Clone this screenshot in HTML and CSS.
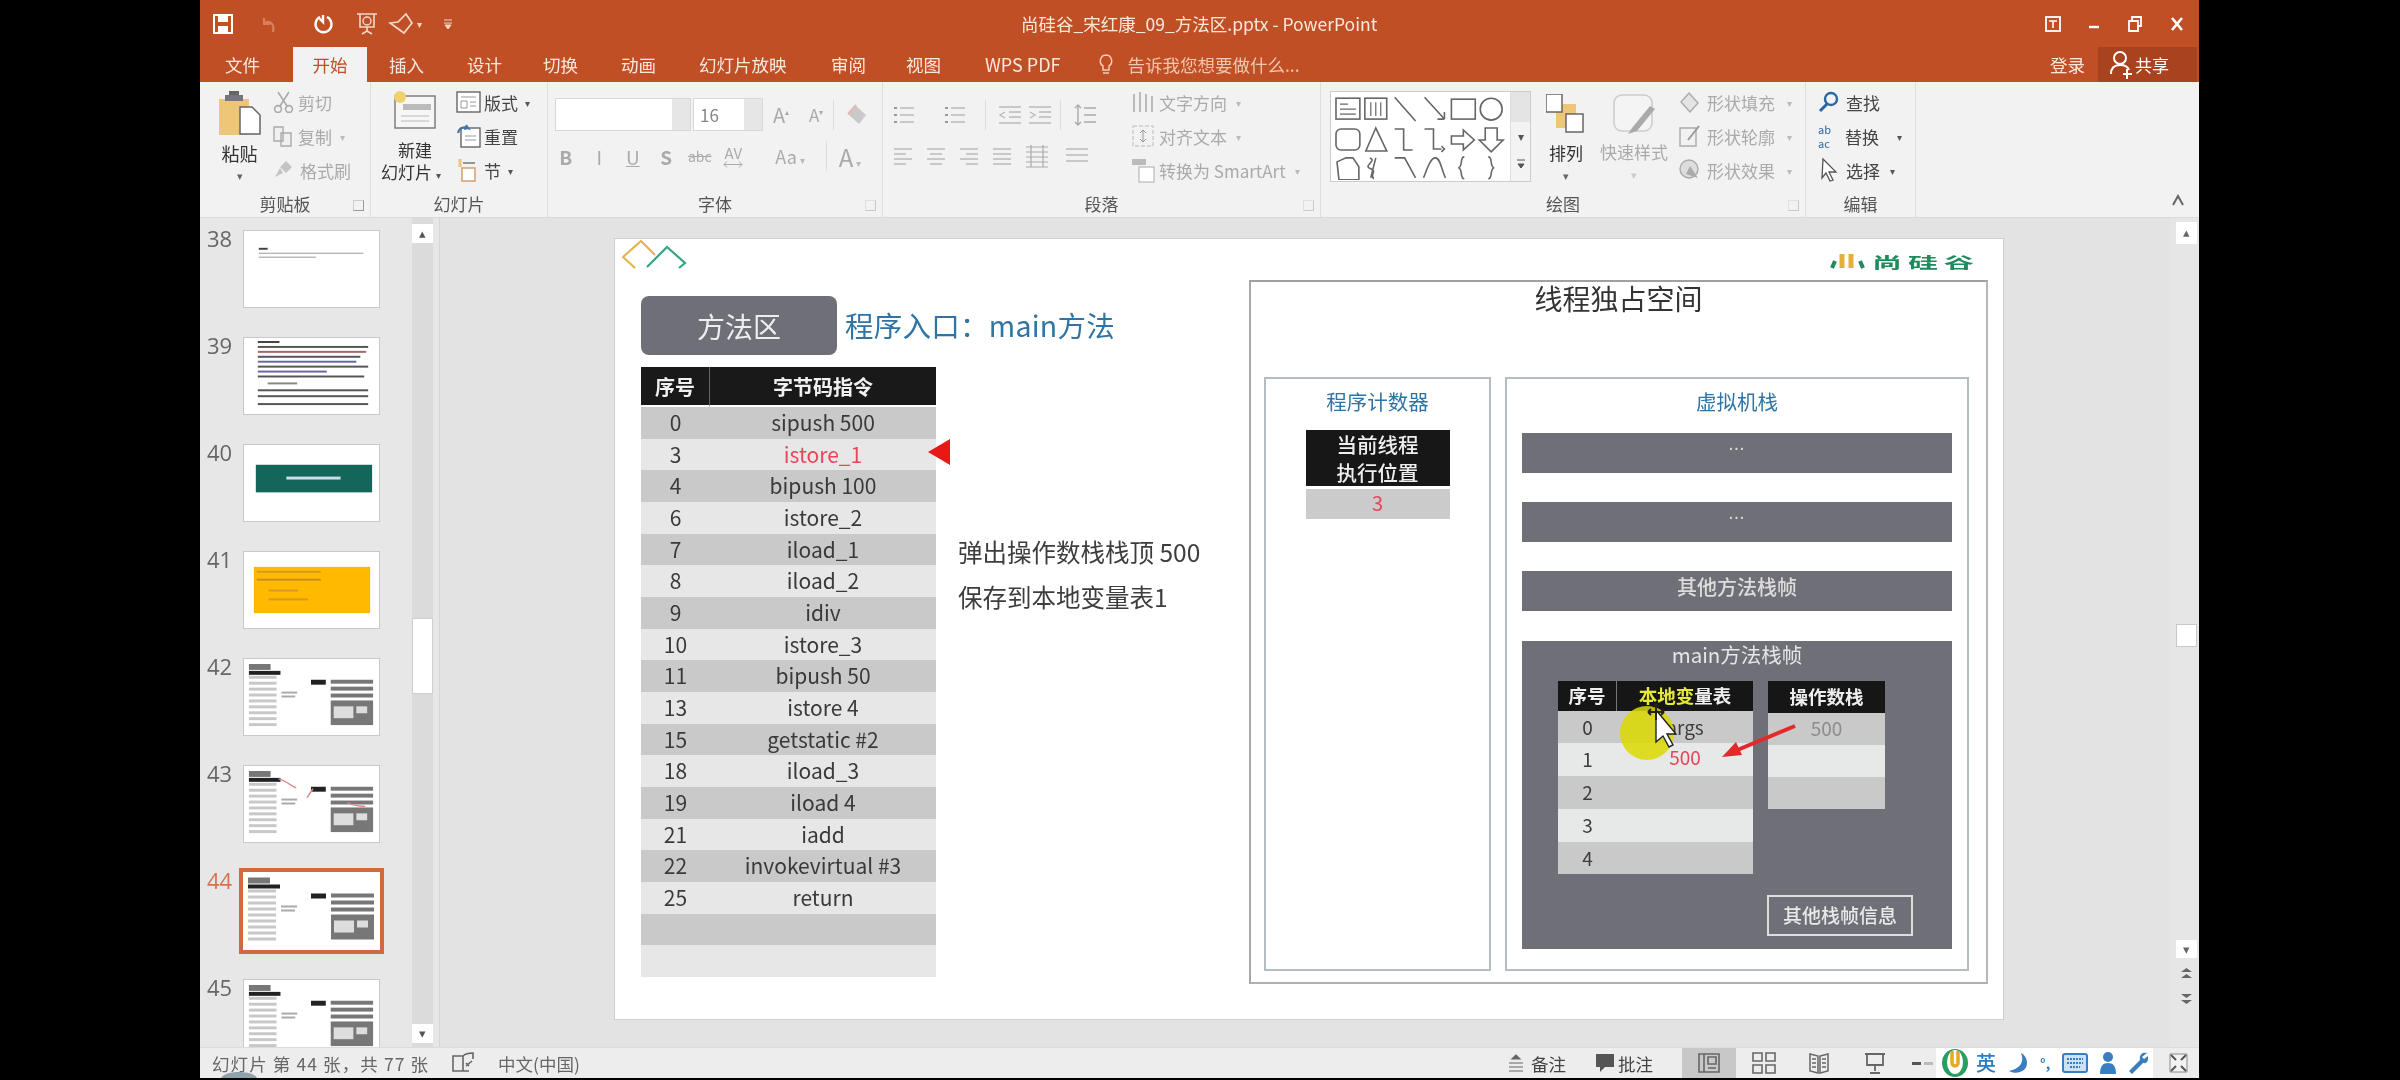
FILE: index.html
```html
<!DOCTYPE html>
<html lang="zh-CN">
<head>
<meta charset="utf-8">
<title>PowerPoint</title>
<link rel="stylesheet" href="styles.css">
</head>
<body>
<svg class="defs" width="0" height="0">
  <symbol id="mini" viewBox="0 0 137 77">
    <rect x="5" y="5" width="22" height="6" fill="#777"/>
    <rect x="5" y="12" width="32" height="4" fill="#222"/>
    <g fill="#c8c8c8"><rect x="5" y="17" width="28" height="3"/><rect x="5" y="23" width="28" height="3"/><rect x="5" y="29" width="28" height="3"/><rect x="5" y="35" width="28" height="3"/><rect x="5" y="41" width="28" height="3"/><rect x="5" y="47" width="28" height="3"/><rect x="5" y="53" width="28" height="3"/><rect x="5" y="59" width="28" height="3"/><rect x="5" y="65" width="28" height="3"/></g>
    <rect x="38" y="33" width="16" height="2" fill="#aaa"/><rect x="38" y="37" width="14" height="2" fill="#aaa"/>
    <rect x="68" y="21" width="15" height="5" fill="#222"/>
    <g fill="#777"><rect x="88" y="21" width="43" height="4"/><rect x="88" y="28" width="43" height="4"/><rect x="88" y="35" width="43" height="4"/><rect x="88" y="42" width="43" height="25"/></g>
    <rect x="91" y="48" width="20" height="12" fill="#ddd"/><rect x="114" y="48" width="11" height="7" fill="#ddd"/>
  </symbol>
</svg>
<div class="window">
  <header class="titlebar">
    <div class="qat">
      <svg class="q-save" width="20" height="20" viewBox="0 0 20 20"><path d="M1 1h18v18H1z" fill="none" stroke="#fff" stroke-width="2"/><rect x="5" y="2" width="10" height="6" fill="#fff"/><rect x="5" y="12" width="10" height="6" fill="#fff"/></svg>
      <svg class="q-undo" width="20" height="20" viewBox="0 0 20 20"><path d="M5 4v6h6M5 10c4-4 11-2 9 8" fill="none" stroke="#d8805c" stroke-width="2.2"/></svg>
      <svg class="q-redo" width="22" height="20" viewBox="0 0 22 20"><path d="M8 3a8 8 0 1 0 7 0M11 1v7l-4-4" fill="none" stroke="#fff" stroke-width="2.4"/></svg>
      <svg class="q-show" width="22" height="24" viewBox="0 0 22 24"><path d="M1 2h20M4 2v13h14V2M11 15v4M6 22l5-3 5 3" fill="none" stroke="#f4d8c8" stroke-width="1.6"/><circle cx="11" cy="9" r="4" fill="none" stroke="#f4d8c8" stroke-width="1.4"/></svg>
      <svg class="q-touch" width="26" height="22" viewBox="0 0 26 22"><path d="M2 10l8-1 8-8 6 9-8 10-7-5z" fill="none" stroke="#f4d8c8" stroke-width="1.7"/></svg>
      <span class="q-caret">▾</span>
      <svg class="q-more" width="10" height="12" viewBox="0 0 10 12"><path d="M1 2h8M1 5h8M2 7l3 4 3-4z" stroke="#f4d8c8" fill="#f4d8c8"/></svg>
    </div>
    <div class="doc-title">尚硅谷_宋红康_09_方法区.pptx - PowerPoint</div>
    <div class="win-btns">
      <svg width="16" height="16" viewBox="0 0 16 16"><rect x="1" y="1" width="14" height="14" fill="none" stroke="#fff" stroke-width="1.8"/><path d="M4 5h8M8 5v7" stroke="#fff" stroke-width="1.6"/></svg>
      <svg width="12" height="16" viewBox="0 0 12 16"><path d="M1 11h10" stroke="#fff" stroke-width="2.4"/></svg>
      <svg width="16" height="16" viewBox="0 0 16 16"><path d="M5 4V1h9v9h-3M2 5h9v10H2z" fill="none" stroke="#fff" stroke-width="1.8"/></svg>
      <svg width="14" height="16" viewBox="0 0 14 16"><path d="M2 2l10 12M12 2L2 14" stroke="#fff" stroke-width="2.6"/></svg>
    </div>
  </header>

  <nav class="tabs">
    <span class="tab t-file">文件</span>
    <span class="tab t-active">开始</span>
    <span class="tab t-insert">插入</span>
    <span class="tab t-design">设计</span>
    <span class="tab t-trans">切换</span>
    <span class="tab t-anim">动画</span>
    <span class="tab t-show">幻灯片放映</span>
    <span class="tab t-review">审阅</span>
    <span class="tab t-view">视图</span>
    <span class="tab t-wps">WPS PDF</span>
    <svg class="bulb" width="16" height="24" viewBox="0 0 16 24"><path d="M8 2a6 6 0 0 0-3 11v4h6v-4A6 6 0 0 0 8 2zM5 20h6" fill="none" stroke="#f3cdb8" stroke-width="1.5"/></svg>
    <span class="tell">告诉我您想要做什么...</span>
    <span class="login">登录</span>
    <span class="share">
      <svg width="24" height="30" viewBox="0 0 24 30"><circle cx="11" cy="8" r="6" fill="none" stroke="#fff" stroke-width="2"/><path d="M2 24c0-7 4-9 9-9s8 2 9 5M14 24h9M18 19v10" fill="none" stroke="#fff" stroke-width="2"/></svg>
      <span>共享</span>
    </span>
  </nav>

  <section class="ribbon">
    <div class="group g-clip">
      <div class="g-body">
        <div class="big paste">
          <svg width="42" height="44" viewBox="0 0 42 44"><rect x="0" y="8" width="30" height="36" fill="#edc777"/><rect x="10" y="0" width="10" height="6" fill="#666"/><rect x="6" y="4" width="18" height="6" fill="#777"/><path d="M21 16h12l8 8v19H21z" fill="#fff" stroke="#666" stroke-width="1.5"/></svg>
          <span class="dark">粘贴</span>
          <span class="drop">▾</span>
        </div>
        <div class="cmds">
          <div class="cmd off"><svg width="23" height="22" viewBox="0 0 23 22"><path d="M6 1l9 14M17 1L8 15" stroke="#aaa" stroke-width="1.6"/><circle cx="6" cy="18" r="3.4" fill="none" stroke="#aaa" stroke-width="1.6"/><circle cx="17" cy="18" r="3.4" fill="none" stroke="#aaa" stroke-width="1.6"/></svg><span>剪切</span></div>
          <div class="cmd off"><svg width="23" height="22" viewBox="0 0 23 22"><path d="M2 2h9v14H2zM9 8h10v13H9z" fill="#f0f0f0" stroke="#aaa" stroke-width="1.4"/></svg><span>复制</span><i class="mini-drop">▾</i></div>
          <div class="cmd off fmt"><svg width="23" height="22" viewBox="0 0 23 22"><path d="M14 2l6 6-6 6-6-6zM8 9l-5 9 8-4" fill="#c4c4c4"/></svg><span>格式刷</span></div>
        </div>
      </div>
      <div class="g-label"><span>剪贴板</span><i class="launch"></i></div>
    </div>

    <div class="group g-slides">
      <div class="g-body">
        <div class="big newslide">
          <svg width="42" height="38" viewBox="0 0 42 38"><rect x="1" y="5" width="40" height="32" fill="#f6f6f6" stroke="#777" stroke-width="1.4"/><rect x="9" y="13" width="28" height="6" fill="#bbb"/><path d="M7 25h28M7 30h28" stroke="#bbb"/><circle cx="6" cy="6" r="6" fill="#f0d070"/></svg>
          <span class="dark nb nb1">新建</span>
          <span class="dark nb nb2">幻灯片<i class="inline-drop">▾</i></span>
        </div>
        <div class="cmds">
          <div class="cmd"><svg width="25" height="22" viewBox="0 0 25 22"><rect x="1" y="1" width="23" height="20" fill="#fff" stroke="#666" stroke-width="1.4"/><path d="M5 6h15M5 10h6v7H5zM14 11h6M14 15h6" stroke="#999" fill="none"/></svg><span>版式</span><i class="inline-drop">▾</i></div>
          <div class="cmd"><svg width="25" height="24" viewBox="0 0 25 24"><rect x="5" y="4" width="19" height="19" fill="#fff" stroke="#666" stroke-width="1.4"/><path d="M2 9a7 7 0 0 1 10-5l-2-3M12 4l-4 1" fill="none" stroke="#3f77a8" stroke-width="2"/><path d="M9 12h11M9 16h11" stroke="#999"/></svg><span>重置</span></div>
          <div class="cmd"><svg width="25" height="24" viewBox="0 0 25 24"><path d="M7 5h12M7 12h12" stroke="#777" stroke-width="1.4"/><path d="M4 1v8" stroke="#edc777" stroke-width="3"/><rect x="6" y="10" width="13" height="13" fill="#fff" stroke="#c96" stroke-width="1.4"/></svg><span>节</span><i class="inline-drop">▾</i></div>
        </div>
      </div>
      <div class="g-label"><span>幻灯片</span></div>
    </div>

    <div class="group g-font">
      <div class="g-body col">
        <div class="font-row1">
          <div class="combo c-name"><i></i></div>
          <div class="combo c-size"><span>16</span><i></i></div>
          <span class="fa fa-up">A<sup>▴</sup></span>
          <span class="fa fa-down">A<sup>▾</sup></span>
          <i class="vline"></i>
          <svg class="eraser" width="22" height="24" viewBox="0 0 22 24"><path d="M9 2l11 10-7 9L2 11z" fill="#c9c9c9"/><path d="M2 11l8-9" stroke="#e8b8b0" stroke-width="2"/></svg>
        </div>
        <div class="font-row2">
          <b class="fc">B</b><em class="fc">I</em><u class="fc">U</u><b class="fc fs">S</b><s class="fc fsm">abc</s><span class="fc fav">AV<svg width="20" height="7" viewBox="0 0 20 7"><path d="M1 3.5h18M1 3.5l3-3M1 3.5l3 3M19 3.5l-3-3M19 3.5l-3 3" stroke="#aaa" fill="none"/></svg></span>
          <span class="fc faa">Aa<i class="mini-drop">▾</i></span>
          <i class="vline v2"></i>
          <span class="fc fbig">A<i class="mini-drop">▾</i></span>
        </div>
      </div>
      <div class="g-label"><span>字体</span><i class="launch faint"></i></div>
    </div>

    <div class="group g-para">
      <div class="g-body">
        <div class="para-icons">
          <div class="para-row">
            <svg class="p1" width="20" height="20" viewBox="0 0 20 20"><path d="M6 3h14M6 10h14M6 17h14" stroke="#bbb" stroke-width="1.4"/><path d="M0 3h3M0 10h3M0 17h3" stroke="#999" stroke-width="2"/></svg>
            <svg class="p2" width="20" height="20" viewBox="0 0 20 20"><path d="M6 3h14M6 10h14M6 17h14" stroke="#bbb" stroke-width="1.4"/><path d="M0 3h3M0 10h3M0 17h3" stroke="#999" stroke-width="2"/></svg>
            <i class="vline v3"></i>
            <svg class="p3" width="22" height="20" viewBox="0 0 22 20"><path d="M0 2h22M10 7h12M10 12h12M0 18h22M6 7L1 10l5 3" fill="none" stroke="#bbb" stroke-width="1.4"/></svg>
            <svg class="p4" width="22" height="20" viewBox="0 0 22 20"><path d="M0 2h22M10 7h12M10 12h12M0 18h22M1 7l5 3-5 3" fill="none" stroke="#bbb" stroke-width="1.4"/></svg>
            <i class="vline v4"></i>
            <svg class="p5" width="22" height="24" viewBox="0 0 22 24"><path d="M4 2v20M1 5l3-3 3 3M1 19l3 3 3-3M10 5h12M10 12h12M10 19h12" fill="none" stroke="#aaa" stroke-width="1.4"/></svg>
          </div>
          <div class="para-row r2">
            <svg width="18" height="18" viewBox="0 0 18 18"><path d="M0 2h18M0 7h12M0 12h18M0 17h12" stroke="#bbb" stroke-width="1.4"/></svg>
            <svg width="18" height="18" viewBox="0 0 18 18"><path d="M0 2h18M3 7h12M0 12h18M3 17h12" stroke="#bbb" stroke-width="1.4"/></svg>
            <svg width="18" height="18" viewBox="0 0 18 18"><path d="M0 2h18M6 7h12M0 12h18M6 17h12" stroke="#bbb" stroke-width="1.4"/></svg>
            <svg width="18" height="18" viewBox="0 0 18 18"><path d="M0 2h18M0 7h18M0 12h18M0 17h18" stroke="#bbb" stroke-width="1.4"/></svg>
            <svg width="22" height="24" viewBox="0 0 22 24"><path d="M0 3h22M0 8h22M0 13h22M0 18h22M0 23h22M5 1v22M17 1v22" stroke="#aaa" stroke-width="1.2"/></svg>
            <svg class="pcol" width="22" height="20" viewBox="0 0 22 20"><path d="M0 3h22M0 9h22M0 15h22" stroke="#bbb" stroke-width="1.6"/></svg>
          </div>
        </div>
        <div class="cmds">
          <div class="cmd off"><svg width="24" height="24" viewBox="0 0 24 24"><path d="M3 22V4M9 22V2M15 22V4M21 22V6" stroke="#bbb" stroke-width="2"/></svg><span>文字方向</span><i class="mini-drop">▾</i></div>
          <div class="cmd off"><svg width="24" height="24" viewBox="0 0 24 24"><path d="M2 2h20v20H2z" fill="none" stroke="#bbb" stroke-dasharray="4 2"/><path d="M12 6v12M9 9l3-3 3 3M9 15l3 3 3-3" fill="none" stroke="#999"/></svg><span>对齐文本</span><i class="mini-drop">▾</i></div>
          <div class="cmd off"><svg width="24" height="26" viewBox="0 0 24 26"><path d="M1 2h14v6H1z" fill="#bbb"/><rect x="8" y="10" width="15" height="15" fill="#fff" stroke="#aaa"/></svg><span>转换为 SmartArt</span><i class="mini-drop">▾</i></div>
        </div>
      </div>
      <div class="g-label"><span>段落</span><i class="launch faint"></i></div>
    </div>

    <div class="group g-draw">
      <div class="g-body">
        <div class="gallery">
          <svg width="178" height="88" viewBox="0 0 178 88" fill="none" stroke="#666" stroke-width="1.6">
            <rect x="3" y="6" width="24" height="21"/><path d="M7 12h8M7 17h16M7 22h16" stroke-width="1.2"/>
            <rect x="32" y="6" width="22" height="21"/><path d="M38 10v14M43 10v14M48 10v14" stroke-width="1.2"/>
            <path d="M62 5l21 24M92 5l20 22"/><path d="M112 27v-7M112 27h-7"/>
            <rect x="119" y="7" width="24" height="20"/><circle cx="159" cy="17" r="11"/>
            <rect x="3" y="37" width="24" height="21" rx="5"/><path d="M43 36l-10 23h21z"/>
            <path d="M62 37h9v21h9M92 37h9v20h8M109 54l3 3-3 3"/>
            <path d="M119 44h12v-6l11 10-11 10v-6h-12z"/><path d="M153 36h12v12h6l-12 12-12-12h6z"/>
            <path d="M4 70l9-4h7l6 9v13H6z"/><path d="M37 66c8 3-8 8 1 11 7 3-2 6 3 10 M43 66l-5 20"/>
            <path d="M62 66h10l11 20"/><path d="M91 86c4-10 7-20 12-20s6 12 10 20"/>
            <path d="M132 65c-5 0-1 10-6 11 5 1 1 11 6 11M156 65c5 0 1 10 6 11-5 1-1 11-6 11"/>
          </svg>
          <div class="gal-scroll">
            <i class="gs gs-top"></i>
            <i class="gs"><b>▾</b></i>
            <i class="gs"><svg width="10" height="12" viewBox="0 0 10 12"><path d="M1 2h8M2 6l3 4 3-4z" stroke="#555" fill="#555"/></svg></i>
          </div>
        </div>
        <div class="big arrange">
          <svg width="40" height="40" viewBox="0 0 40 40"><rect x="10" y="10" width="20" height="24" fill="#edc777"/><rect x="0" y="0" width="16" height="18" fill="#fff" stroke="#666" stroke-width="1.5"/><rect x="20" y="20" width="17" height="18" fill="#fff" stroke="#666" stroke-width="1.5"/></svg>
          <span class="dark">排列</span>
          <span class="drop">▾</span>
        </div>
        <div class="big quick off">
          <svg width="44" height="42" viewBox="0 0 44 42"><rect x="2" y="1" width="38" height="36" rx="8" fill="#f4f4f4" stroke="#ccc" stroke-width="1.5"/><path d="M38 12L20 34l-4 6 9-3 18-22z" fill="#aaa"/></svg>
          <span>快速样式</span>
          <span class="drop">▾</span>
        </div>
        <div class="cmds c-shape">
          <div class="cmd off"><svg width="22" height="24" viewBox="0 0 22 24"><path d="M11 3l9 10-8 9-9-10z" fill="#e4e4e4" stroke="#aaa" stroke-width="1.4"/></svg><span>形状填充</span><i class="mini-drop">▾</i></div>
          <div class="cmd off"><svg width="22" height="24" viewBox="0 0 22 24"><path d="M2 4h16v18H2z" fill="none" stroke="#aaa" stroke-width="1.4"/><path d="M21 2L10 16" stroke="#999" stroke-width="2"/></svg><span>形状轮廓</span><i class="mini-drop">▾</i></div>
          <div class="cmd off"><svg width="22" height="24" viewBox="0 0 22 24"><circle cx="11" cy="11" r="9" fill="#ddd" stroke="#aaa" stroke-width="1.4"/><path d="M8 16l12 4-8-12z" fill="#aaa"/></svg><span>形状效果</span><i class="mini-drop">▾</i></div>
        </div>
      </div>
      <div class="g-label"><span>绘图</span><i class="launch faint"></i></div>
    </div>

    <div class="group g-edit">
      <div class="g-body">
        <div class="cmds">
          <div class="cmd"><svg width="22" height="22" viewBox="0 0 22 22"><circle cx="13" cy="8" r="6" fill="none" stroke="#2a66a3" stroke-width="2.4"/><path d="M9 13l-7 7" stroke="#2a66a3" stroke-width="3"/></svg><span>查找</span></div>
          <div class="cmd"><span class="abac">ab<br>ac</span><span>替换</span><i class="inline-drop wide">▾</i></div>
          <div class="cmd"><svg width="22" height="26" viewBox="0 0 22 26"><path d="M5 2l13 13h-7l4 8-3 1-4-8-4 5z" fill="#fff" stroke="#555" stroke-width="1.3"/></svg><span>选择</span><i class="inline-drop">▾</i></div>
        </div>
      </div>
      <div class="g-label"><span>编辑</span></div>
    </div>
    <div class="collapse"><svg width="14" height="12" viewBox="0 0 14 12"><path d="M2 11l5-9 5 9" fill="none" stroke="#666" stroke-width="2"/></svg></div>
  </section>

  <main class="workspace">
    <aside class="thumbs">
      <div class="thumb-list">
        <div class="t-row"><span class="t-num">38</span><div class="thumb"><svg viewBox="0 0 137 77"><rect x="15" y="17" width="9" height="2" fill="#444"/><rect x="15" y="22" width="106" height="1" fill="#999"/><rect x="15" y="26" width="58" height="1" fill="#999"/></svg></div></div>
        <div class="t-row"><span class="t-num">39</span><div class="thumb"><svg viewBox="0 0 137 77"><rect x="14" y="3" width="22" height="2" fill="#444"/><g fill="#555"><rect x="14" y="8" width="112" height="2"/><rect x="14" y="18" width="104" height="2"/><rect x="14" y="28" width="112" height="2"/><rect x="14" y="38" width="108" height="2"/><rect x="14" y="52" width="112" height="2"/><rect x="14" y="58" width="112" height="2"/><rect x="14" y="66" width="112" height="2"/></g><rect x="14" y="13" width="110" height="2" fill="#a66"/><rect x="14" y="23" width="100" height="2" fill="#66a"/><rect x="14" y="33" width="70" height="2" fill="#66a"/><rect x="24" y="45" width="30" height="2" fill="#888"/></svg></div></div>
        <div class="t-row"><span class="t-num">40</span><div class="thumb"><svg viewBox="0 0 137 77"><rect x="12" y="20" width="118" height="28" fill="#14665a"/><rect x="43" y="32" width="55" height="3" fill="#cde"/></svg></div></div>
        <div class="t-row"><span class="t-num">41</span><div class="thumb"><svg viewBox="0 0 137 77"><rect x="10" y="15" width="118" height="47" fill="#ffba00"/><rect x="13" y="19" width="65" height="2" fill="#d79a20"/><rect x="13" y="27" width="65" height="2" fill="#c88f20"/><rect x="25" y="38" width="30" height="2" fill="#d79a20"/><rect x="25" y="47" width="40" height="2" fill="#d79a20"/></svg></div></div>
        <div class="t-row"><span class="t-num">42</span><div class="thumb"><svg viewBox="0 0 137 77"><use href="#mini"/></svg></div></div>
        <div class="t-row"><span class="t-num">43</span><div class="thumb"><svg viewBox="0 0 137 77"><use href="#mini"/><path d="M35 13c8 2 14 8 18 9M64 32l6-9M105 37c5 4 12 3 18 4" stroke="#d88" stroke-width="1.5" fill="none"/></svg></div></div>
        <div class="t-row sel"><span class="t-num">44</span><div class="thumb"><svg viewBox="0 0 137 77"><use href="#mini"/></svg></div></div>
        <div class="t-row"><span class="t-num">45</span><div class="thumb"><svg viewBox="0 0 137 77"><use href="#mini"/></svg></div></div>
      </div>
      <div class="vscroll">
        <span class="sbtn">▴</span>
        <span class="sthumb"></span>
        <span class="sbtn sdown">▾</span>
      </div>
    </aside>

    <div class="canvas">
      <article class="slide">
        <div class="slide-left">
          <svg class="logo-l" width="68" height="30" viewBox="0 0 68 30" fill="none" stroke-width="2.2"><path d="M13 28L1 17 19 1l14 14" stroke="#e3b350"/><path d="M25 27L45 7l18 16-6 5" stroke="#36a585"/></svg>
          <div class="head-row">
            <div class="method">方法区</div>
            <h1 class="entry">程序入口：main方法</h1>
          </div>
          <div class="code-area">
            <div class="code">
              <div class="c-head c-no">序号</div><div class="c-head">字节码指令</div>
              <div class="c-row dark-r"><span>0</span><span>sipush 500</span></div>
              <div class="c-row cur"><span>3</span><span class="red">istore_1</span><i class="pointer"></i></div>
              <div class="c-row dark-r"><span>4</span><span>bipush 100</span></div>
              <div class="c-row"><span>6</span><span>istore_2</span></div>
              <div class="c-row dark-r"><span>7</span><span>iload_1</span></div>
              <div class="c-row"><span>8</span><span>iload_2</span></div>
              <div class="c-row dark-r"><span>9</span><span>idiv</span></div>
              <div class="c-row"><span>10</span><span>istore_3</span></div>
              <div class="c-row dark-r"><span>11</span><span>bipush 50</span></div>
              <div class="c-row"><span>13</span><span>istore 4</span></div>
              <div class="c-row dark-r"><span>15</span><span>getstatic #2</span></div>
              <div class="c-row"><span>18</span><span>iload_3</span></div>
              <div class="c-row dark-r"><span>19</span><span>iload 4</span></div>
              <div class="c-row"><span>21</span><span>iadd</span></div>
              <div class="c-row dark-r"><span>22</span><span>invokevirtual #3</span></div>
              <div class="c-row"><span>25</span><span>return</span></div>
              <div class="c-row dark-r"><span></span><span></span></div>
              <div class="c-row"><span></span><span></span></div>
            </div>
            <div class="note">
              <p>弹出操作数栈栈顶 500</p>
              <p>保存到本地变量表1</p>
            </div>
          </div>
        </div>
        <div class="slide-right">
          <div class="brand">
            <svg width="36" height="16" viewBox="0 0 36 16"><path d="M3 15l3-7M31 8l3 7" stroke="#1f8a5c" stroke-width="4"/><path d="M13 15V1M22 15V1" stroke="#e4b03b" stroke-width="5"/></svg>
            <span class="brand-text">尚硅谷</span>
          </div>
          <section class="frame">
            <h2 class="frame-title">线程独占空间</h2>
            <div class="frame-cols">
              <div class="box pc">
                <h3 class="box-title">程序计数器</h3>
                <div class="pc-head">当前线程<br>执行位置</div>
                <div class="pc-val">3</div>
              </div>
              <div class="box stack">
                <h3 class="box-title">虚拟机栈</h3>
                <div class="bar">...</div>
                <div class="bar">...</div>
                <div class="bar bar-t">其他方法栈帧</div>
                <div class="frame-main">
                  <div class="fm-title">main方法栈帧</div>
                  <div class="fm-tables">
                    <div class="lv">
                      <div class="lv-h lv-no">序号</div>
                      <div class="lv-h lv-name"><span class="yel">本地变</span>量表</div>
                      <div class="lv-c lv-d">0</div><div class="lv-c lv-d">args</div>
                      <div class="lv-c">1</div><div class="lv-c"></div>
                      <div class="lv-c lv-d">2</div><div class="lv-c lv-d"></div>
                      <div class="lv-c">3</div><div class="lv-c"></div>
                      <div class="lv-c lv-d">4</div><div class="lv-c lv-d"></div>
                    </div>
                    <div class="ops">
                      <div class="ops-h">操作数栈</div>
                      <div class="ops-c ops-d"><span class="faded">500</span></div>
                      <div class="ops-c"></div>
                      <div class="ops-c ops-d"></div>
                    </div>
                  </div>
                  <div class="other">其他栈帧信息</div>
                  <svg class="overlay" width="431" height="308" viewBox="0 0 431 308">
                    <circle cx="125" cy="92" r="27" fill="#dcd800" opacity=".85"/>
                    <path d="M134 69v32l7-6 6 11 4-2-6-11h9z" fill="#fff" stroke="#222" stroke-width="1.4"/>
                    <path d="M126 71h16M134 63v16M126 71l3-3M126 71l3 3M142 71l-3-3M142 71l-3 3M134 63l-3 3M134 63l3 3" stroke="#222" stroke-width="1.8" fill="none"/>
                    <path d="M273 85l-60 25" stroke="#e5292a" stroke-width="4"/><path d="M200 116l14-15 6 13z" fill="#e5292a"/>
                    <text class="ov-500" x="163" y="124">500</text>
                  </svg>
                </div>
              </div>
            </div>
          </section>
        </div>
      </article>
    </div>

    <div class="rscroll">
      <span class="rbtn">▴</span>
      <span class="rthumb"></span>
      <span class="rbtn r-down">▾</span>
      <svg class="rarrow" width="21" height="12" viewBox="0 0 21 12"><path d="M5 5l5.5-4 5.5 4zM5 11l5.5-4 5.5 4z" fill="#666"/></svg>
      <svg class="rarrow r2" width="21" height="12" viewBox="0 0 21 12"><path d="M5 1l5.5 4 5.5-4zM5 7l5.5 4 5.5-4z" fill="#666"/></svg>
    </div>
  </main>

  <footer class="status">
    <svg class="st-arc" width="38" height="7" viewBox="0 0 38 7"><path d="M1 7c4-8 32-8 36 0z" fill="#8fa3ad"/></svg>
    <span class="st-count">幻灯片 第 44 张，共 77 张</span>
    <svg class="st-book" width="22" height="22" viewBox="0 0 22 22"><path d="M11 4H1v15h10V4zM11 4c2-2 6-3 10-3v6M11 19h6M14 14l6-5M14 11l3 3" fill="none" stroke="#666" stroke-width="1.6"/></svg>
    <span class="st-lang">中文(中国)</span>
    <span class="st-fill"></span>
    <svg width="14" height="20" viewBox="0 0 14 20"><path d="M7 2l-4 4h8zM0 10h14M0 14h14M0 18h14" stroke="#666" fill="#666" stroke-width="1.2"/></svg>
    <span class="st-note">备注</span>
    <svg class="st-cicon" width="18" height="20" viewBox="0 0 18 20"><path d="M0 1h18v13H9l-5 5v-5H0z" fill="#555"/></svg>
    <span class="st-cmt">批注</span>
    <span class="view v-on"><svg width="22" height="20" viewBox="0 0 22 20"><path d="M1 1h20v18H1zM6 1v18M10 4h8v7h-8zM10 15h8" fill="none" stroke="#666" stroke-width="1.6"/></svg></span>
    <span class="view v2nd"><svg width="24" height="22" viewBox="0 0 24 22"><path d="M1 1h9v8H1zM14 1h9v8h-9zM1 13h9v8H1zM14 13h9v8h-9z" fill="none" stroke="#666" stroke-width="1.6"/></svg></span>
    <span class="view v3rd"><svg width="20" height="22" viewBox="0 0 20 22"><path d="M1 2l8 2v17l-8-2zM19 2l-8 2v17l8-2zM3 7h4M3 11h4M3 15h4M13 7h4M13 11h4M13 15h4" fill="none" stroke="#666" stroke-width="1.5"/></svg></span>
    <span class="view v4th"><svg width="20" height="22" viewBox="0 0 20 22"><path d="M0 2h20M2 2v11h16V2M10 13v6M5 21h10" fill="none" stroke="#666" stroke-width="1.8"/></svg></span>
    <span class="zoom-mini"><i></i><i class="z2"></i></span>
    <div class="ime">
      <svg width="28" height="30" viewBox="0 0 28 30"><ellipse cx="14" cy="15" rx="13" ry="14" fill="#2a9d63"/><ellipse cx="14" cy="14" rx="8" ry="12" fill="#fff"/><path d="M11 3v12a3 3 0 0 0 6 0V3" fill="none" stroke="#e9a821" stroke-width="3.5"/></svg>
      <span class="ime-en">英</span>
      <svg width="20" height="24" viewBox="0 0 20 24"><path d="M13 2c4 10-2 16-12 18 7 4 18 1 18-8 0-4-2-8-6-10z" fill="#3a7ec2"/></svg>
      <span class="ime-dot">°,</span>
      <svg width="26" height="20" viewBox="0 0 26 20"><rect x="1" y="1" width="24" height="18" rx="2" fill="#cfe2f4" stroke="#3a7ec2" stroke-width="2"/><path d="M5 6h16M5 10h16M8 14h10" stroke="#3a7ec2" stroke-width="2" stroke-dasharray="2 1"/></svg>
      <svg width="16" height="24" viewBox="0 0 16 24"><circle cx="8" cy="6" r="5" fill="#3a7ec2"/><path d="M0 23c0-8 3-11 8-11s8 3 8 11z" fill="#3a7ec2"/></svg>
      <svg width="20" height="24" viewBox="0 0 20 24"><path d="M19 2c-5-1-8 2-7 7L1 20l3 3 11-11c4 1 6-3 5-7l-4 3-2-2z" fill="#3a7ec2"/></svg>
    </div>
    <svg class="st-fit" width="19" height="20" viewBox="0 0 19 20"><path d="M1 1h17v18H1z" fill="#f2f2f2" stroke="#888"/><path d="M2 2l5 5M17 2l-5 5M2 18l5-5M17 18l-5-5" stroke="#555" stroke-width="2"/></svg>
  </footer>
</div>
</body>
</html>
```

FILE: styles.css
```css
* { box-sizing: border-box; }
html, body { margin: 0; height: 100%; background: #000; overflow: hidden; }
body { font-family: "Noto Sans CJK SC", "Noto Sans", sans-serif; color: #444; }
.defs { position: absolute; }
i { font-style: normal; }
h1, h2, h3, p { margin: 0; font-weight: 400; }

.window { width: 1999px; height: 1078px; margin-left: 200px; background: #e4e3e3; display: flex; flex-direction: column; filter: blur(.55px); overflow: hidden; }

/* title */
.titlebar { height: 47px; background: #c14f26; display: flex; align-items: center; color: #fbe8dd; flex: none; }
.qat { width: 821px; display: flex; align-items: center; padding-left: 13px; }
.q-undo { margin-left: 26px; }
.q-redo { margin-left: 33px; }
.q-show { margin-left: 22px; }
.q-touch { margin-left: 10px; }
.q-caret { font-size: 10px; margin-left: 3px; color: #f4d8c8; }
.q-more { margin-left: 21px; }
.doc-title { font-size: 17.5px; white-space: nowrap; width: 356px; }
.win-btns { margin-left: auto; display: flex; align-items: center; gap: 27px; padding-right: 15px; }

/* tabs */
.tabs { height: 35px; background: #c14f26; display: flex; align-items: center; font-size: 17.5px; color: #fbe8dd; flex: none; padding-right: 2px; }
.tab { white-space: nowrap; line-height: 35px; }
.t-file { margin-left: 25px; }
.t-active { margin-left: 33px; width: 74px; text-align: center; background: #f3f2f2; color: #c14f26; align-self: stretch; }
.t-insert { margin-left: 22px; }
.t-design { margin-left: 43px; }
.t-trans { margin-left: 41px; }
.t-anim { margin-left: 43px; }
.t-show { margin-left: 43px; }
.t-review { margin-left: 44.5px; }
.t-view { margin-left: 40px; }
.t-wps { margin-left: 44px; font-size: 18px; }
.bulb { margin-left: 38px; flex: none; }
.tell { margin-left: 13px; font-size: 17.5px; color: #f0c6ae; white-space: nowrap; }
.login { margin-left: auto; font-size: 17.5px; }
.share { margin-left: 13px; width: 99px; align-self: stretch; background: #a9421f; display: flex; align-items: center; gap: 2px; padding-left: 11px; font-size: 17px; color: #fff; }

/* ribbon */
.ribbon { height: 136px; background: #f3f2f2; display: flex; flex: none; border-bottom: 1px solid #dadada; font-size: 16px; color: #555; }
.group { display: flex; flex-direction: column; border-right: 1px solid #dedede; padding-top: 3px; flex: none; }
.g-body { height: 105px; display: flex; }
.g-body.col { flex-direction: column; }
.g-label { height: 26px; position: relative; display: flex; justify-content: center; align-items: center; font-size: 17px; color: #555; }
.launch { position: absolute; right: 6px; bottom: 5px; width: 11px; height: 11px; border: 1px solid #999; border-top-color: #ccc; border-left-color: #ccc; }
.launch.faint { opacity: .45; }
.g-clip { width: 171px; }
.g-slides { width: 177px; }
.g-font { width: 335px; }
.g-para { width: 438px; }
.g-draw { width: 485px; }
.g-edit { width: 110px; }

.big { display: flex; flex-direction: column; align-items: center; color: #aaa; font-size: 17px; line-height: 22px; white-space: nowrap; }
.big svg { margin-top: 6px; }
.big .dark { color: #333; }
.drop { font-size: 11px; color: #666; }
.paste { width: 45px; margin-left: 17px; }
.paste .dark { margin-top: 7px; font-size: 18px; }
.paste svg { margin-top: 6px; }
.newslide { width: 70px; margin-left: 9px; }
.nb1 { margin-top: 10px; }
.nb2 { margin-right: 8px; }
.cmds { display: grid; grid-template-rows: repeat(3, 34px); }
.cmd { display: flex; align-items: center; gap: 3px; font-size: 17px; color: #444; white-space: nowrap; }
.cmd.off { color: #aaa; }
.cmd svg { flex: none; }
.fmt span { margin-left: 2px; }
.g-clip .cmds { margin-left: 10px; }
.g-slides .cmds { margin-left: 6px; }
.inline-drop { font-size: 10px; color: #555; margin-left: 4px; }
.inline-drop.wide { margin-left: 12px; }
.mini-drop { font-size: 10px; color: #bbb; margin-left: 5px; }

.font-row1 { display: flex; align-items: center; height: 33px; margin-top: 13px; padding-left: 7px; color: #aaa; }
.combo { height: 33px; background: #fff; border: 1px solid #d8d8d8; position: relative; font-size: 17px; color: #888; line-height: 31px; padding-left: 6px; }
.combo i { position: absolute; right: 0; top: 0; bottom: 0; width: 18px; background: #e6e6e6; }
.c-name { width: 136px; }
.c-size { width: 70px; margin-left: 2px; }
.fa { font-size: 20px; margin-left: 10px; width: 24px; line-height: 1; }
.fa sup { font-size: 8px; }
.fa-down { font-size: 17px; margin-left: 12px; }
.vline { display: block; width: 1px; height: 30px; background: #ddd; }
.eraser { margin-left: 12px; }
.font-row2 { display: flex; align-items: center; height: 50px; padding-left: 1px; color: #aaa; font-size: 19px; }
.fc { width: 33.5px; text-align: center; font-style: normal; }
.fsm { font-size: 14px; }
.fav { font-size: 15px; line-height: 16px; display: flex; flex-direction: column; align-items: center; }
.faa { width: 56px; margin-left: 12px; font-size: 18px; white-space: nowrap; }
.faa i, .fbig i { margin-left: 3px; }
.v2 { margin-left: 8px; }
.fbig { font-size: 24px; width: 46px; white-space: nowrap; }

.para-icons { width: 241px; }
.para-row { display: flex; align-items: center; height: 33px; margin-top: 13px; padding-left: 11px; }
.p2 { margin-left: 31px; }
.v3 { margin-left: 20px; }
.p3 { margin-left: 13px; }
.p4 { margin-left: 8px; }
.v4 { margin-left: 9px; }
.p5 { margin-left: 13px; }
.para-row.r2 { height: 50px; margin-top: 0; gap: 15px; }
.pcol { margin-left: 3px; }
.g-para .cmds { margin-left: 7px; }
.g-para .cmd { gap: 4px; }

.gallery { margin: 6px 0 0 9px; width: 201px; height: 91px; background: #fff; border: 1px solid #ccc; display: flex; justify-content: space-between; padding-left: 2px; }
.gal-scroll { width: 20px; display: grid; grid-template-rows: 1fr 1fr 1fr; background: #eee; border-left: 1px solid #ddd; }
.gs { background: #f3f3f3; font-size: 12px; text-align: center; line-height: 28px; color: #555; }
.gs b { font-weight: 400; }
.gs-top { background: #e4e4e4; }
.arrange { width: 44px; margin-left: 13px; }
.arrange svg { margin-top: 9px; margin-bottom: 8px; }
.quick { width: 72px; margin-left: 10px; }
.quick svg { margin-top: 9px; margin-bottom: 5px; }
.quick .drop { color: #ccc; }
.c-shape { margin-left: 8px; }
.c-shape .cmd { gap: 7px; }
.g-edit .cmds { margin-left: 12px; }
.g-edit .cmd { gap: 6px; }
.abac { font-size: 11px; line-height: 14px; color: #2a66a3; width: 21px; white-space: nowrap; }
.collapse { margin-left: auto; align-self: flex-end; padding: 0 14px 6px 0; }

/* workspace */
.workspace { flex: 1; display: flex; min-height: 0; }
.thumbs { width: 240px; display: flex; border-right: 1px solid #d6d6d6; background: #e8e7e7; flex: none; }
.thumb-list { width: 212px; padding: 12px 0 0 7px; display: flex; flex-direction: column; gap: 29px; overflow: hidden; }
.t-row { display: flex; flex: none; height: 78px; }
.t-num { width: 36px; font-family: "Open Sans", sans-serif; font-size: 22px; line-height: 22px; margin-top: -3px; color: #666; }
.thumb { width: 137px; height: 78px; background: #fff; border: 1px solid #c9c9c9; }
.thumb svg { display: block; width: 100%; height: 100%; }
.sel .t-num { color: #d9734f; }
.sel .thumb { outline: 4px solid #d0693f; outline-offset: 0; border: none; }
.vscroll { width: 21px; background: #dcdbdb; display: flex; flex-direction: column; align-items: center; padding-top: 6px; padding-bottom: 4px; }
.sbtn { width: 21px; height: 19px; background: #fff; text-align: center; font-size: 13px; line-height: 18px; color: #555; }
.sthumb { width: 21px; height: 76px; background: #fff; margin-top: 375px; border: 1px solid #cfcfcf; }
.sdown { margin-top: auto; }

.canvas { flex: 1; padding: 20px 0 0 174px; min-width: 0; background: #e4e3e3; }
.slide { width: 1390px; height: 782px; background: #fff; border: 1px solid #cfcfcf; display: flex; }

.slide-left { width: 634px; padding: 1px 0 0 7px; }
.logo-l { display: block; }
.head-row { display: flex; align-items: center; margin: 26px 0 0 19px; }
.method { width: 196px; height: 59px; border-radius: 8px; background: #6f6f77; color: #eee; font-size: 28px; display: flex; align-items: center; justify-content: center; }
.entry { margin-left: 8px; font-size: 28.5px; letter-spacing: .25px; color: #2f74a3; white-space: nowrap; position: relative; top: -1px; }
.code-area { display: flex; margin: 12px 0 0 19px; }
.code { width: 295px; display: grid; grid-template-columns: 69px 226px; flex: none; }
.c-head { height: 40px; background: #191919; border-bottom: 2px solid #fff; color: #f1f1f1; font-weight: 700; font-size: 20px; display: flex; align-items: center; justify-content: center; }
.c-no { border-right: 1px solid #666; }
.c-row { grid-column: 1 / -1; height: 31.67px; display: grid; grid-template-columns: 69px 226px; background: #e7e7e7; font-size: 21px; line-height: 31px; text-align: center; color: #3a3a3a; position: relative; }
.dark-r { background: #c9c9c9; }
.red { color: #e8465a; }
.pointer { position: absolute; left: 287px; top: 0; border: 13px solid transparent; border-left: 0; border-right: 22px solid #e81818; }
.note { margin: 162px 0 0 22px; font-size: 24.5px; line-height: 45px; color: #3d3d3d; white-space: nowrap; }

.slide-right { width: 739px; display: flex; flex-direction: column; }
.brand { height: 41px; display: flex; align-items: flex-start; justify-content: flex-end; gap: 7px; padding: 14px 14px 0 0; }
.brand-text { font-size: 30px; line-height: 16px; letter-spacing: 6px; margin-right: -6px; color: #1f8a5c; font-weight: 700; transform: scaleY(.5); white-space: nowrap; }
.frame { height: 704px; border: 2px solid #a7a7a7; border-color: #a0a0a0 #b8b8b8 #b0b0b0 #a8a8a8; display: flex; flex-direction: column; }
.frame-title { text-align: center; font-size: 28px; line-height: 32px; color: #333; height: 95px; }
.frame-cols { display: flex; gap: 14px; padding-left: 13px; }
.box { height: 594px; border: 2px solid #b3bec3; }
.pc { width: 227px; }
.stack { width: 464px; padding: 0 15px; }
.box-title { text-align: center; font-size: 20.5px; line-height: 44px; height: 51px; color: #2f74a3; }
.pc-head { width: 144px; height: 56px; margin: 0 auto; background: #171717; color: #eee; font-size: 20.5px; line-height: 28px; text-align: center; font-weight: 500; }
.pc-val { width: 144px; height: 30px; margin: 3px auto 0; background: #cbcbcb; color: #e8465a; text-align: center; font-size: 20px; line-height: 28px; }
.bar { height: 40px; margin-bottom: 29px; background: #6f6f77; color: #ddd; text-align: center; font-size: 16px; line-height: 20px; letter-spacing: 1px; }
.stack .box-title { height: 53.5px; }
.bar-t { font-size: 20px; line-height: 32px; letter-spacing: 0; font-weight: 500; margin-bottom: 30px; }
.frame-main { height: 308px; background: #6f6f77; position: relative; }
.fm-title { text-align: center; font-size: 20.5px; line-height: 27px; color: #e6e6e6; height: 40px; }
.fm-tables { display: flex; padding-left: 36px; align-items: flex-start; }
.lv { width: 195px; display: grid; grid-template-columns: 59px 136px; }
.lv-h { height: 30px; background: #161616; color: #eee; font-weight: 700; font-size: 18.5px; line-height: 28px; text-align: center; }
.lv-no { border-right: 1px solid #777; }
.yel { color: #e6e83a; }
.lv-c { height: 32.8px; background: #e7e8e8; text-align: center; font-size: 19px; line-height: 31px; color: #3c3c3c; }
.lv-d { background: #c9c9c9; }
.ops { width: 117px; margin-left: 15px; }
.ops-h { height: 32px; background: #161616; color: #eee; font-weight: 700; font-size: 18.5px; line-height: 30px; text-align: center; }
.ops-c { height: 32px; background: #e7e8e8; text-align: center; font-size: 19px; line-height: 30px; }
.ops-d { background: #c9c9c9; }
.faded { color: #8d8d8d; }
.other { position: absolute; left: 245px; top: 254px; width: 146px; height: 41px; border: 2px solid #dedede; color: #e9e9e9; font-size: 19px; font-weight: 500; line-height: 36px; text-align: center; }
.overlay { position: absolute; left: 0; top: 0; pointer-events: none; }
.ov-500 { font-family: "Noto Sans CJK SC", sans-serif; font-size: 19px; fill: #e8465a; text-anchor: middle; }

.rscroll { width: 29px; background: #e7e6e6; display: flex; flex-direction: column; align-items: flex-end; padding: 4px 2px 0 0; flex: none; }
.rbtn { width: 21px; height: 22px; background: #fff; font-size: 13px; line-height: 20px; text-align: center; color: #666; }
.rthumb { width: 21px; height: 23px; margin-top: 380px; background: #fff; border: 1px solid #c8c8c8; }
.r-down { height: 18px; line-height: 17px; margin-top: 293px; }
.rarrow { margin-top: 9px; }
.rarrow.r2 { margin-top: 14px; }

/* status */
.status { height: 31px; flex: none; background: #eeeded; display: flex; align-items: center; font-size: 17.5px; color: #666; position: relative; border-top: 1px solid #dcdcdc; }
.st-arc { position: absolute; left: 20px; bottom: 0; }
.st-count { margin-left: 12px; width: 240px; letter-spacing: 1.1px; white-space: nowrap; }
.st-lang { margin-left: 24px; white-space: nowrap; }
.st-fill { flex: 1; }
.st-note { margin-left: 8px; color: #444; }
.st-cicon { margin-left: 30px; }
.st-cmt { margin-left: 4px; color: #444; margin-right: 29px; }
.view { width: 46px; height: 100%; display: flex; align-items: center; justify-content: center; flex: none; }
.v-on { width: 54px; background: #c9c8c8; }
.v2nd { margin-left: 5px; }
.v3rd { margin-left: 9px; }
.v4th { margin-left: 10px; }
.zoom-mini { display: flex; align-items: center; gap: 3px; margin-left: 14px; }
.zoom-mini i { display: block; width: 9px; height: 3px; background: #555; }
.zoom-mini i.z2 { background: #bbb; }
.ime { width: 217px; height: 30px; margin-left: 3px; background: #fff; display: flex; align-items: center; gap: 12px; padding-left: 5px; flex: none; }
.ime-en { color: #2a7cc2; font-size: 20px; line-height: 1; font-weight: 500; margin-left: -5px; }
.ime-dot { color: #2a7cc2; font-weight: 700; font-size: 14px; line-height: 1; }
.st-fit { margin-left: 16px; margin-right: 11px; flex: none; }
```
